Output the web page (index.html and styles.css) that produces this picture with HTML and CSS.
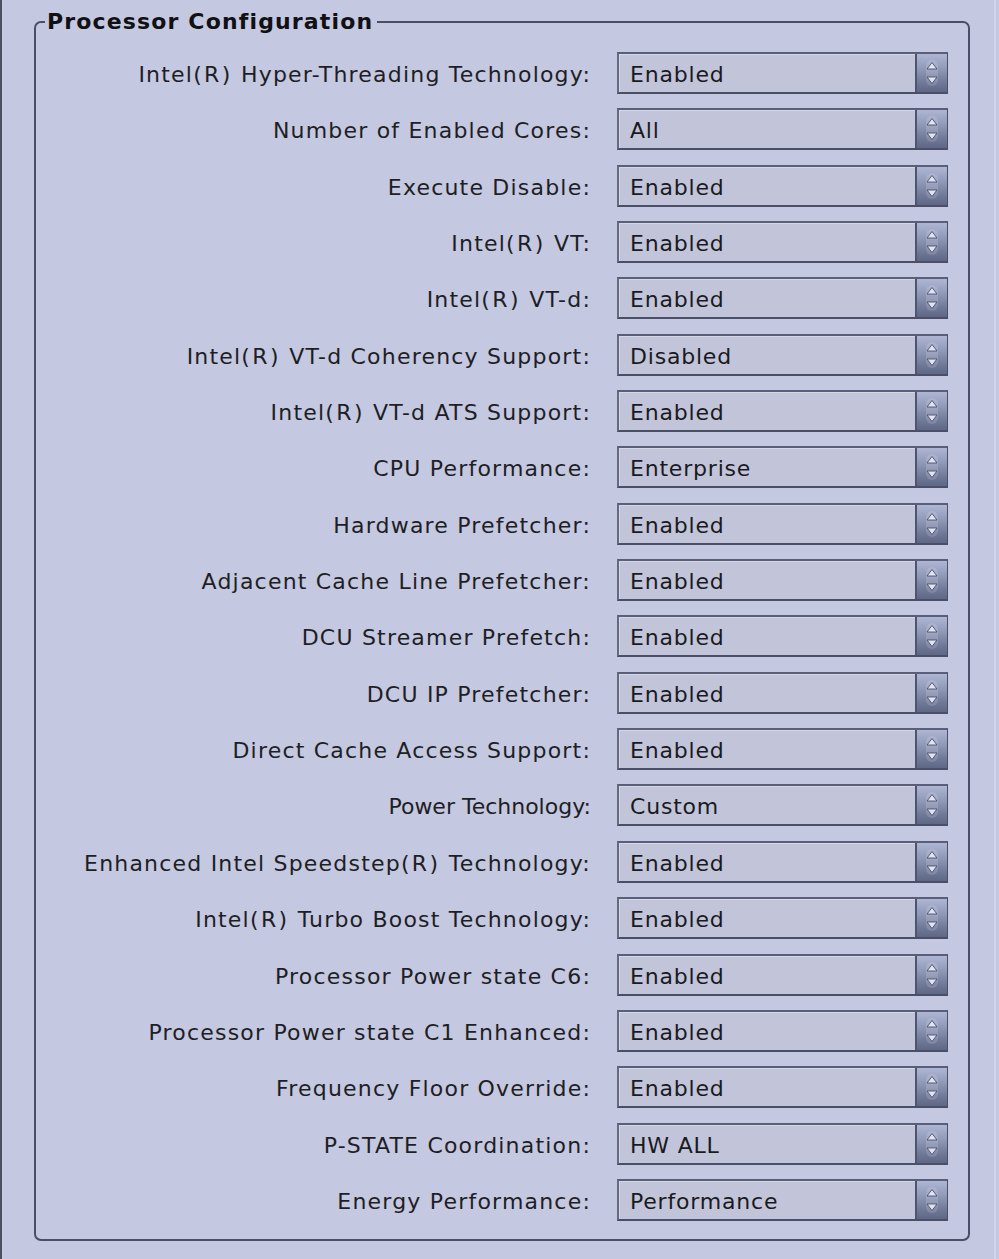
FILE: index.html
```html
<!DOCTYPE html>
<html>
<head>
<meta charset="utf-8">
<link rel="stylesheet" href="styles.css">
</head>
<body>
<div class="page">
  <fieldset class="group">
    <legend class="group-title">Processor Configuration</legend>
    <div class="rows">
      <div class="row"><label class="lbl">Intel<span class="reg">(R)</span> Hyper-Threading Technology:</label><div class="sel"><span class="val">Enabled</span><span class="btn"><svg viewBox="0 0 30 38" width="30" height="38"><rect x="9" y="6" width="12" height="26" rx="6" class="pill"/><path d="M15 8.5 L20 15 L10 15 Z" class="arr"/><path d="M15 29.5 L20 23 L10 23 Z" class="arr"/></svg></span></div></div>
      <div class="row"><label class="lbl">Number of Enabled Cores:</label><div class="sel"><span class="val">All</span><span class="btn"><svg viewBox="0 0 30 38" width="30" height="38"><rect x="9" y="6" width="12" height="26" rx="6" class="pill"/><path d="M15 8.5 L20 15 L10 15 Z" class="arr"/><path d="M15 29.5 L20 23 L10 23 Z" class="arr"/></svg></span></div></div>
      <div class="row"><label class="lbl">Execute Disable:</label><div class="sel"><span class="val">Enabled</span><span class="btn"><svg viewBox="0 0 30 38" width="30" height="38"><rect x="9" y="6" width="12" height="26" rx="6" class="pill"/><path d="M15 8.5 L20 15 L10 15 Z" class="arr"/><path d="M15 29.5 L20 23 L10 23 Z" class="arr"/></svg></span></div></div>
      <div class="row"><label class="lbl">Intel<span class="reg">(R)</span> VT:</label><div class="sel"><span class="val">Enabled</span><span class="btn"><svg viewBox="0 0 30 38" width="30" height="38"><rect x="9" y="6" width="12" height="26" rx="6" class="pill"/><path d="M15 8.5 L20 15 L10 15 Z" class="arr"/><path d="M15 29.5 L20 23 L10 23 Z" class="arr"/></svg></span></div></div>
      <div class="row"><label class="lbl">Intel<span class="reg">(R)</span> VT-d:</label><div class="sel"><span class="val">Enabled</span><span class="btn"><svg viewBox="0 0 30 38" width="30" height="38"><rect x="9" y="6" width="12" height="26" rx="6" class="pill"/><path d="M15 8.5 L20 15 L10 15 Z" class="arr"/><path d="M15 29.5 L20 23 L10 23 Z" class="arr"/></svg></span></div></div>
      <div class="row"><label class="lbl">Intel<span class="reg">(R)</span> VT-d Coherency Support:</label><div class="sel"><span class="val">Disabled</span><span class="btn"><svg viewBox="0 0 30 38" width="30" height="38"><rect x="9" y="6" width="12" height="26" rx="6" class="pill"/><path d="M15 8.5 L20 15 L10 15 Z" class="arr"/><path d="M15 29.5 L20 23 L10 23 Z" class="arr"/></svg></span></div></div>
      <div class="row"><label class="lbl">Intel<span class="reg">(R)</span> VT-d ATS Support:</label><div class="sel"><span class="val">Enabled</span><span class="btn"><svg viewBox="0 0 30 38" width="30" height="38"><rect x="9" y="6" width="12" height="26" rx="6" class="pill"/><path d="M15 8.5 L20 15 L10 15 Z" class="arr"/><path d="M15 29.5 L20 23 L10 23 Z" class="arr"/></svg></span></div></div>
      <div class="row"><label class="lbl">CPU Performance:</label><div class="sel"><span class="val">Enterprise</span><span class="btn"><svg viewBox="0 0 30 38" width="30" height="38"><rect x="9" y="6" width="12" height="26" rx="6" class="pill"/><path d="M15 8.5 L20 15 L10 15 Z" class="arr"/><path d="M15 29.5 L20 23 L10 23 Z" class="arr"/></svg></span></div></div>
      <div class="row"><label class="lbl">Hardware Prefetcher:</label><div class="sel"><span class="val">Enabled</span><span class="btn"><svg viewBox="0 0 30 38" width="30" height="38"><rect x="9" y="6" width="12" height="26" rx="6" class="pill"/><path d="M15 8.5 L20 15 L10 15 Z" class="arr"/><path d="M15 29.5 L20 23 L10 23 Z" class="arr"/></svg></span></div></div>
      <div class="row"><label class="lbl">Adjacent Cache Line Prefetcher:</label><div class="sel"><span class="val">Enabled</span><span class="btn"><svg viewBox="0 0 30 38" width="30" height="38"><rect x="9" y="6" width="12" height="26" rx="6" class="pill"/><path d="M15 8.5 L20 15 L10 15 Z" class="arr"/><path d="M15 29.5 L20 23 L10 23 Z" class="arr"/></svg></span></div></div>
      <div class="row"><label class="lbl">DCU Streamer Prefetch:</label><div class="sel"><span class="val">Enabled</span><span class="btn"><svg viewBox="0 0 30 38" width="30" height="38"><rect x="9" y="6" width="12" height="26" rx="6" class="pill"/><path d="M15 8.5 L20 15 L10 15 Z" class="arr"/><path d="M15 29.5 L20 23 L10 23 Z" class="arr"/></svg></span></div></div>
      <div class="row"><label class="lbl">DCU IP Prefetcher:</label><div class="sel"><span class="val">Enabled</span><span class="btn"><svg viewBox="0 0 30 38" width="30" height="38"><rect x="9" y="6" width="12" height="26" rx="6" class="pill"/><path d="M15 8.5 L20 15 L10 15 Z" class="arr"/><path d="M15 29.5 L20 23 L10 23 Z" class="arr"/></svg></span></div></div>
      <div class="row"><label class="lbl">Direct Cache Access Support:</label><div class="sel"><span class="val">Enabled</span><span class="btn"><svg viewBox="0 0 30 38" width="30" height="38"><rect x="9" y="6" width="12" height="26" rx="6" class="pill"/><path d="M15 8.5 L20 15 L10 15 Z" class="arr"/><path d="M15 29.5 L20 23 L10 23 Z" class="arr"/></svg></span></div></div>
      <div class="row"><label class="lbl narrow">Power Technology:</label><div class="sel"><span class="val">Custom</span><span class="btn"><svg viewBox="0 0 30 38" width="30" height="38"><rect x="9" y="6" width="12" height="26" rx="6" class="pill"/><path d="M15 8.5 L20 15 L10 15 Z" class="arr"/><path d="M15 29.5 L20 23 L10 23 Z" class="arr"/></svg></span></div></div>
      <div class="row"><label class="lbl">Enhanced Intel Speedstep<span class="reg">(R)</span> Technology:</label><div class="sel"><span class="val">Enabled</span><span class="btn"><svg viewBox="0 0 30 38" width="30" height="38"><rect x="9" y="6" width="12" height="26" rx="6" class="pill"/><path d="M15 8.5 L20 15 L10 15 Z" class="arr"/><path d="M15 29.5 L20 23 L10 23 Z" class="arr"/></svg></span></div></div>
      <div class="row"><label class="lbl">Intel<span class="reg">(R)</span> Turbo Boost Technology:</label><div class="sel"><span class="val">Enabled</span><span class="btn"><svg viewBox="0 0 30 38" width="30" height="38"><rect x="9" y="6" width="12" height="26" rx="6" class="pill"/><path d="M15 8.5 L20 15 L10 15 Z" class="arr"/><path d="M15 29.5 L20 23 L10 23 Z" class="arr"/></svg></span></div></div>
      <div class="row"><label class="lbl">Processor Power state C6:</label><div class="sel"><span class="val">Enabled</span><span class="btn"><svg viewBox="0 0 30 38" width="30" height="38"><rect x="9" y="6" width="12" height="26" rx="6" class="pill"/><path d="M15 8.5 L20 15 L10 15 Z" class="arr"/><path d="M15 29.5 L20 23 L10 23 Z" class="arr"/></svg></span></div></div>
      <div class="row"><label class="lbl">Processor Power state C1 Enhanced:</label><div class="sel"><span class="val">Enabled</span><span class="btn"><svg viewBox="0 0 30 38" width="30" height="38"><rect x="9" y="6" width="12" height="26" rx="6" class="pill"/><path d="M15 8.5 L20 15 L10 15 Z" class="arr"/><path d="M15 29.5 L20 23 L10 23 Z" class="arr"/></svg></span></div></div>
      <div class="row"><label class="lbl">Frequency Floor Override:</label><div class="sel"><span class="val">Enabled</span><span class="btn"><svg viewBox="0 0 30 38" width="30" height="38"><rect x="9" y="6" width="12" height="26" rx="6" class="pill"/><path d="M15 8.5 L20 15 L10 15 Z" class="arr"/><path d="M15 29.5 L20 23 L10 23 Z" class="arr"/></svg></span></div></div>
      <div class="row"><label class="lbl">P-STATE Coordination:</label><div class="sel"><span class="val">HW ALL</span><span class="btn"><svg viewBox="0 0 30 38" width="30" height="38"><rect x="9" y="6" width="12" height="26" rx="6" class="pill"/><path d="M15 8.5 L20 15 L10 15 Z" class="arr"/><path d="M15 29.5 L20 23 L10 23 Z" class="arr"/></svg></span></div></div>
      <div class="row"><label class="lbl">Energy Performance:</label><div class="sel"><span class="val">Performance</span><span class="btn"><svg viewBox="0 0 30 38" width="30" height="38"><rect x="9" y="6" width="12" height="26" rx="6" class="pill"/><path d="M15 8.5 L20 15 L10 15 Z" class="arr"/><path d="M15 29.5 L20 23 L10 23 Z" class="arr"/></svg></span></div></div>
    </div>
  </fieldset>
</div>
</body>
</html>
```

FILE: styles.css
```css
html, body {
  margin: 0;
  padding: 0;
}
body {
  background: #c4c8e0;
  border-left: 2px solid #4e5060;
  min-height: 1259px;
  box-sizing: border-box;
  font-family: "DejaVu Sans", Verdana, sans-serif;
  color: #1e1e24;
}
.page {
  margin-right: 3px;
  border-right: 2px solid #d2d5e8;
  min-height: 1259px;
  box-sizing: border-box;
  padding-top: 9px;
}
.group {
  margin: 0 24px 0 32px;
  padding: 10px 20px 11px 0;
  border: 2px solid #4a4e68;
  border-radius: 7px;
  min-width: 0;
}
.group-title {
  margin-left: 9px;
  padding: 0 4px 0 2px;
  font-weight: bold;
  font-size: 22px;
  line-height: 26px;
  letter-spacing: 1.15px;
  color: #111114;
}
.rows {
  display: grid;
  grid-template-columns: 1fr 331px;
  grid-auto-rows: 56.35px;
  column-gap: 26px;
}
.row {
  display: contents;
}
.lbl {
  text-align: right;
  white-space: nowrap;
  font-size: 22px;
  letter-spacing: 1.2px;
  line-height: 34px;
  padding-top: 13px;
}
.lbl.narrow {
  letter-spacing: 0px;
}
.reg {
  letter-spacing: 2.4px;
}
.sel {
  margin-top: 7px;
  height: 42px;
  box-sizing: border-box;
  display: flex;
  background: #c2c5da;
  border-top: 2px solid #5a5e78;
  border-left: 2px solid #656982;
  border-bottom: 2px solid #4a4e66;
  border-right: 1px solid #4a4e66;
}
.val {
  flex: 1;
  font-size: 22px;
  letter-spacing: 0.8px;
  line-height: 34px;
  padding-top: 4px;
  padding-left: 11px;
  color: #1a1a1e;
  border-right: 2px solid #50546c;
  box-shadow: inset 1px 1px 0 #d4d7e8;
}
.btn {
  width: 30px;
  flex: none;
  display: flex;
  align-items: center;
  justify-content: center;
  background: linear-gradient(to bottom, #aeb6d4 0%, #9098b8 40%, #717999 75%, #5f6787 100%);
  overflow: hidden;
}
.btn svg {
  display: block;
}
.pill {
  fill: #ffffff;
  fill-opacity: 0.14;
}
.arr {
  fill: #e2e5f1;
  stroke: #464e6e;
  stroke-width: 0.9;
  stroke-linejoin: round;
}
```
